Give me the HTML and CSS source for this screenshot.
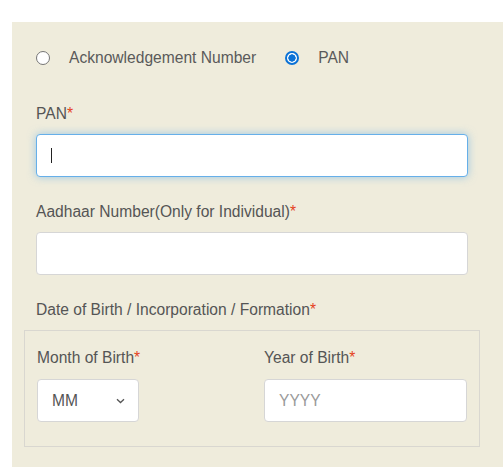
FILE: index.html
```html
<!DOCTYPE html>
<html>
<head>
<meta charset="utf-8">
<link rel="stylesheet" href="styles.css">
</head>
<body>
<div class="panel">
  <div class="radio-row">
    <label class="radio-opt"><span class="radio"></span><span class="radio-text">Acknowledgement Number</span></label>
    <label class="radio-opt"><span class="radio checked"></span><span class="radio-text">PAN</span></label>
  </div>
  <div class="group first">
    <div class="label">PAN<span class="req">*</span></div>
    <div class="input focused"><span class="caret"></span></div>
  </div>
  <div class="group">
    <div class="label">Aadhaar Number(Only for Individual)<span class="req">*</span></div>
    <div class="input"></div>
  </div>
  <div class="group">
    <div class="label">Date of Birth / Incorporation / Formation<span class="req">*</span></div>
  </div>
  <div class="fieldset">
    <div class="col">
      <div class="label">Month of Birth<span class="req">*</span></div>
      <div class="input select"><span>MM</span>
        <svg class="chev" width="9" height="6" viewBox="0 0 9 6"><path d="M1 1.2 L4.5 4.5 L8 1.2" fill="none" stroke="#555" stroke-width="1.3"/></svg>
      </div>
    </div>
    <div class="col">
      <div class="label">Year of Birth<span class="req">*</span></div>
      <div class="input year"><span class="ph">YYYY</span></div>
    </div>
  </div>
</div>
</body>
</html>
```

FILE: styles.css
```css
html, body {
  margin: 0;
  padding: 0;
  background: #ffffff;
}
body {
  font-family: "Liberation Sans", Arial, sans-serif;
  font-size: 15.6px;
  line-height: 20px;
  color: #555555;
  padding-top: 22px;
  height: 467px;
  box-sizing: border-box;
  overflow: hidden;
}
.panel {
  margin-left: 12px;
  background: #efecdc;
  padding: 26px 23px 30px 12px;
  height: 445px;
  box-sizing: border-box;
}
.radio-row {
  display: flex;
  align-items: center;
  padding-left: 12px;
  height: 20px;
}
.radio-opt {
  display: flex;
  align-items: center;
}
.radio-opt + .radio-opt {
  margin-left: 29px;
}
.radio {
  flex: none;
  width: 14px;
  height: 14px;
  box-sizing: border-box;
  border: 1px solid #767676;
  border-radius: 50%;
  background: #fff;
  margin: 0 19px 0 0;
}
.radio.checked {
  border: 2px solid #0b72d6;
  background: radial-gradient(circle, #0b72d6 0 3.4px, #fff 3.9px);
}
.radio-text {
  color: #5a5a5a;
}
.group {
  padding: 0 12px;
  margin-top: 25px;
}
.group.first {
  margin-top: 36px;
}
.label {
  height: 20px;
}
.req {
  color: #e5421d;
}
.input {
  margin-top: 10px;
  height: 43px;
  box-sizing: border-box;
  border: 1px solid #d6d6d6;
  border-radius: 4px;
  background: #fff;
  display: flex;
  align-items: center;
  padding-left: 14px;
}
.input.focused {
  border-color: #66afe9;
  box-shadow: 0 0 8px rgba(102, 175, 233, 0.6);
}
.caret {
  width: 1px;
  height: 15px;
  background: #222;
}
.fieldset {
  margin-top: 10px;
  border: 1px solid #d9d7d0;
  padding: 17px 12px 24px 12px;
  display: grid;
  grid-template-columns: 227px 1fr;
}
.fieldset .input {
  margin-top: 11px;
}
.select {
  width: 102px;
  justify-content: space-between;
  padding-right: 13px;
  color: #555;
}
.chev {
  display: block;
}
.ph {
  color: #9a9a9a;
}
```
